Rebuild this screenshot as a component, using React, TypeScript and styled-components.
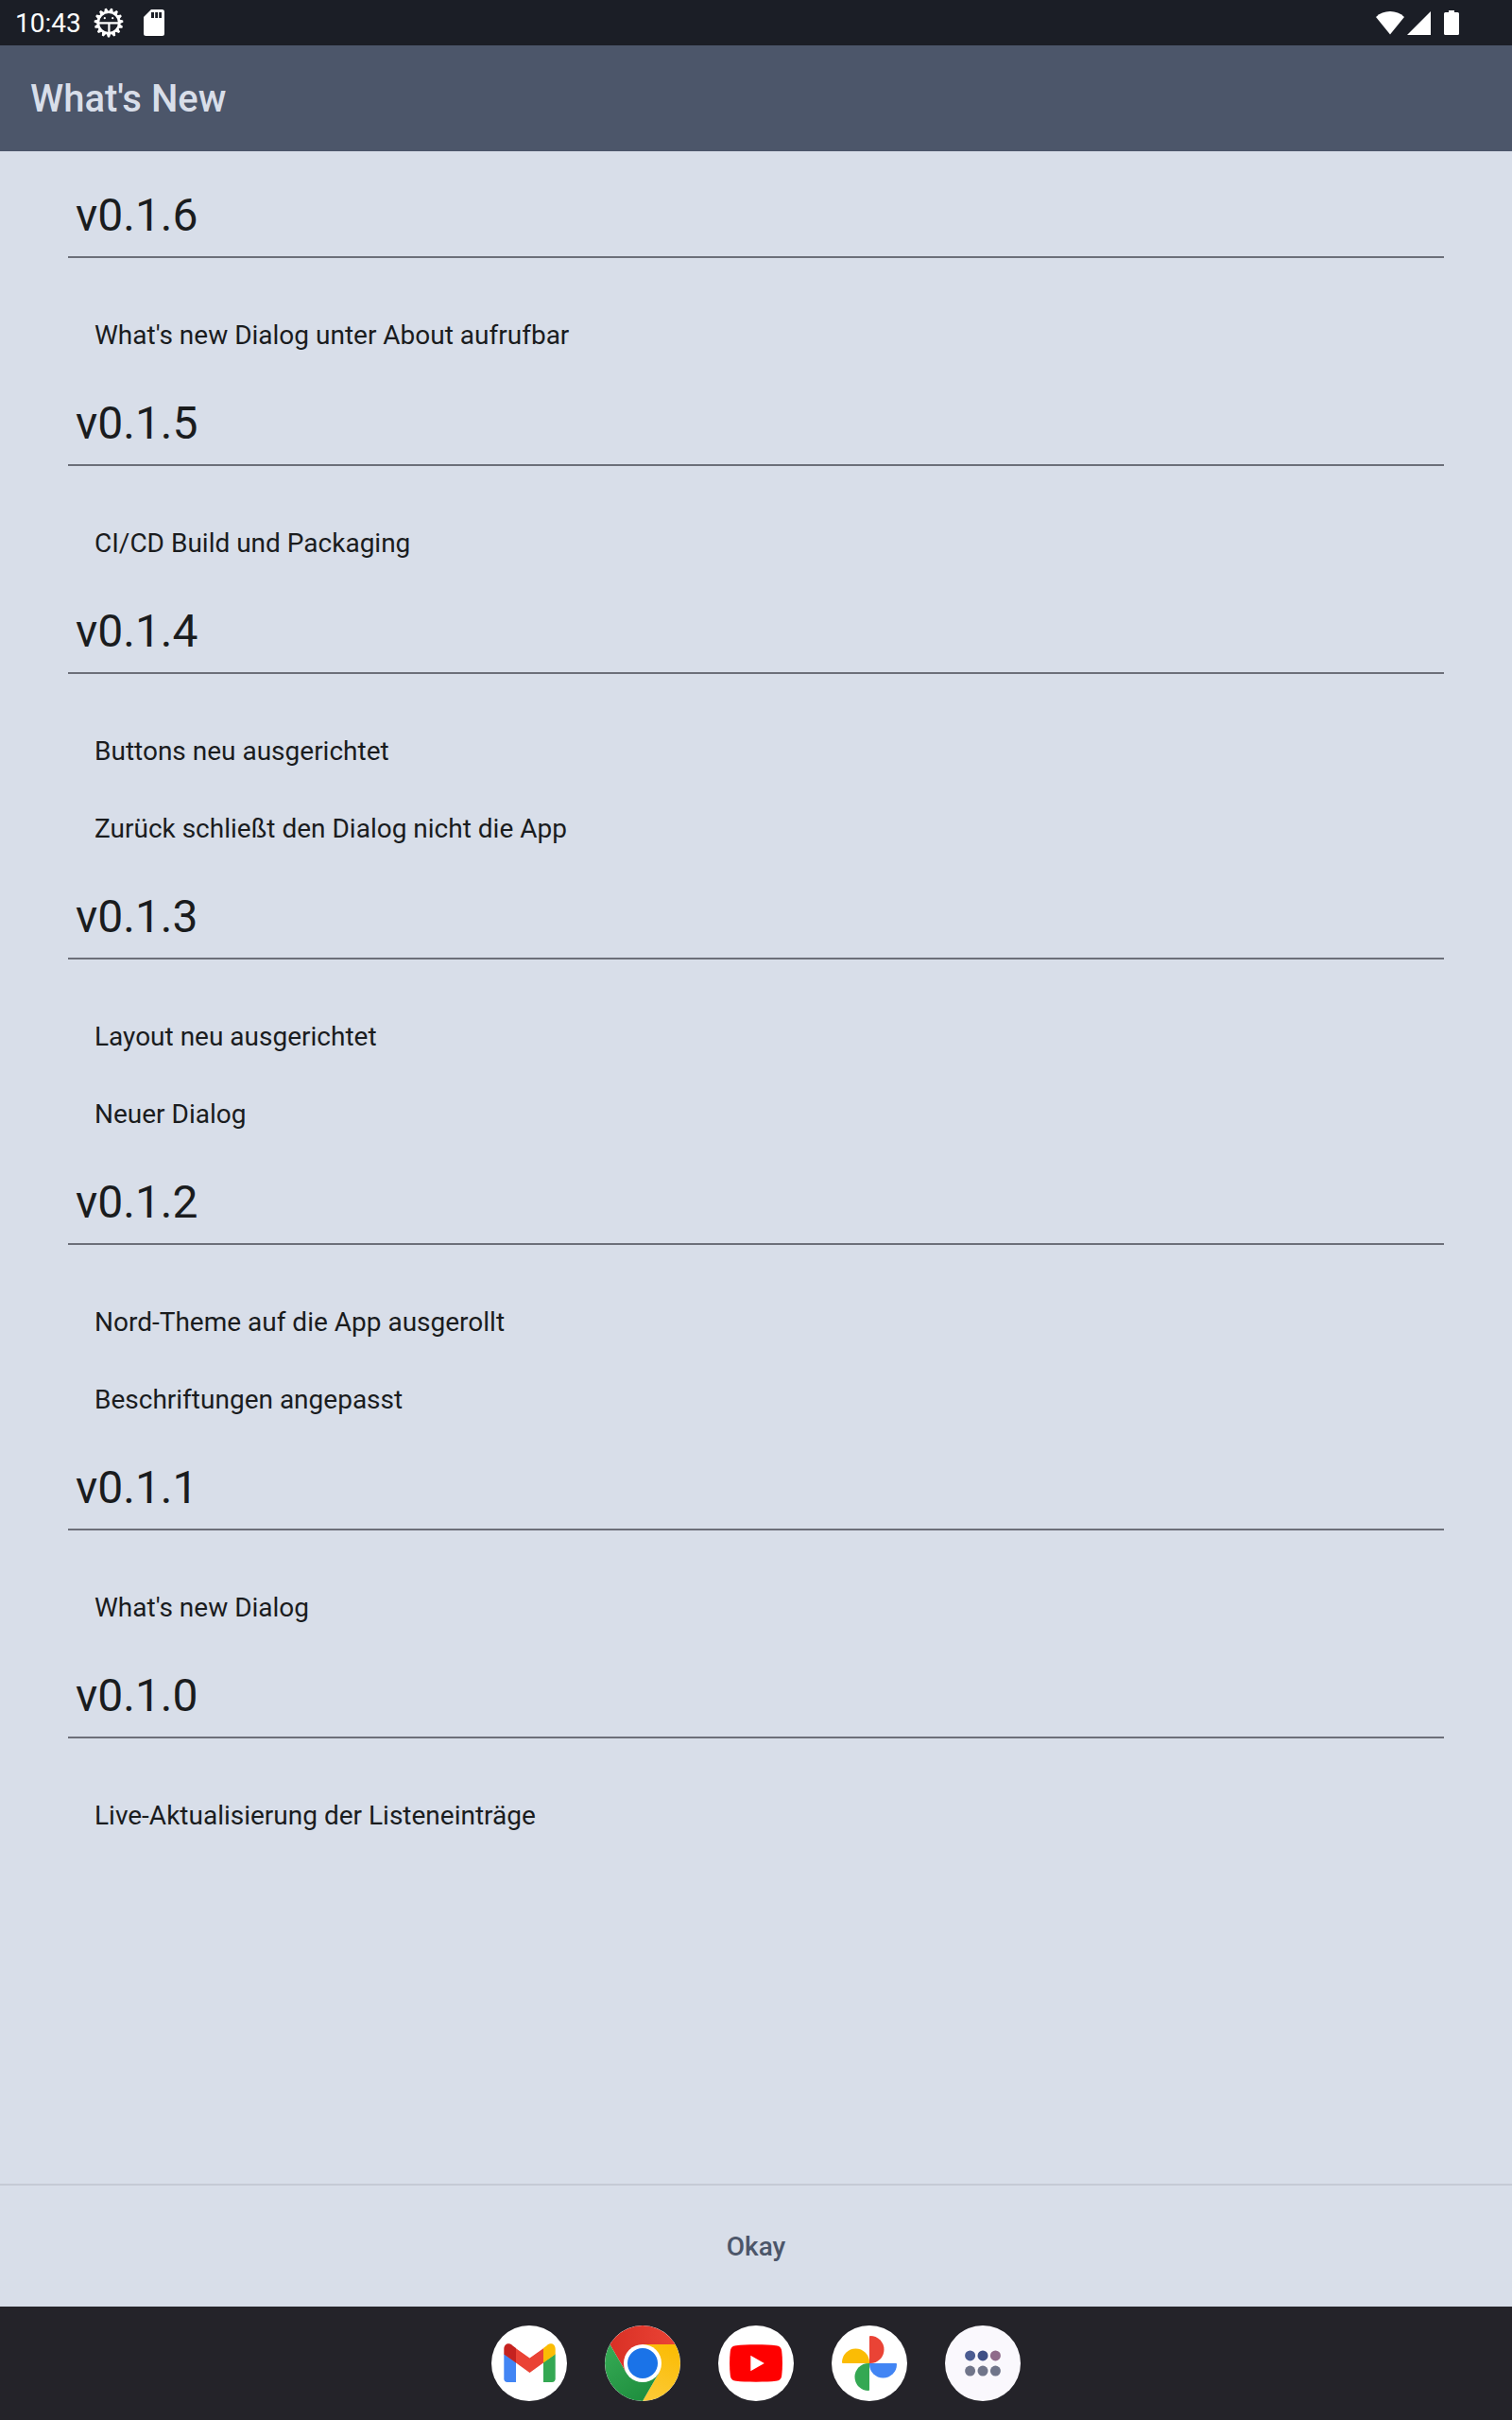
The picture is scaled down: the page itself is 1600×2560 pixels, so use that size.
import React from "react";
import styled, { createGlobalStyle } from "styled-components";

const color = {
  surface: "#d8dee9",
  primary: "#4c566a",
  text: "#1a1c1e",
  rule: "#6c6f79",
  footerRule: "#c5cad5",
  status: "#1b1e26",
  dock: "#242329",
};

const GlobalStyle = createGlobalStyle`
  *, *::before, *::after { box-sizing: border-box; }
  body {
    margin: 0;
    background: ${color.surface};
    color: ${color.text};
    font-family: Roboto, "Noto Sans", sans-serif;
  }
`;

const Screen = styled.div`
  display: flex;
  flex-direction: column;
  min-height: 100vh;
`;

const StatusBar = styled.div`
  display: flex;
  align-items: center;
  justify-content: space-between;
  height: 48px;
  padding: 0 56px 0 16px;
  background: ${color.status};
  color: #fff;
`;

const StatusGroup = styled.div<{ $gap: number }>`
  display: flex;
  align-items: center;
  gap: ${({ $gap }) => $gap}px;

  svg {
    display: block;
  }
`;

const Clock = styled.time`
  padding-top: 2px;
  font-size: 28px;
  line-height: 34px;
`;

const AppBar = styled.header`
  display: flex;
  align-items: center;
  height: 112px;
  padding: 2px 32px 0;
  background: ${color.primary};
`;

const Title = styled.h1`
  margin: 0;
  color: ${color.surface};
  font-size: 40px;
  font-weight: 500;
  line-height: 48px;
`;

const Content = styled.main`
  flex: 1;
  padding: 15px 72px 0;
`;

const VersionHeading = styled.h2`
  margin: 0;
  padding: 21px 8px 11px;
  border-bottom: 2px solid ${color.rule};
  font-size: 48px;
  font-weight: 400;
  line-height: 64px;
`;

const ChangeList = styled.ul`
  margin: 0;
  padding: 40px 28px 0;
  list-style: none;
`;

const Change = styled.li`
  padding: 25px 0 23px;
  font-size: 28px;
  line-height: 34px;
`;

const Footer = styled.footer`
  display: flex;
  align-items: center;
  justify-content: center;
  height: 130px;
  border-top: 2px solid ${color.footerRule};
`;

const TextButton = styled.button`
  padding: 25px 24px 23px;
  border: 0;
  background: none;
  color: ${color.primary};
  font-family: inherit;
  font-size: 28px;
  font-weight: 500;
  line-height: 34px;
  cursor: pointer;
`;

const Dock = styled.nav`
  display: flex;
  align-items: center;
  justify-content: center;
  gap: 40px;
  height: 120px;
  background: ${color.dock};
`;

const DockButton = styled.button<{ $tint?: string }>`
  width: 80px;
  height: 80px;
  padding: 0;
  overflow: hidden;
  border: 0;
  border-radius: 50%;
  background: ${({ $tint }) => $tint ?? "#fff"};
  cursor: pointer;

  svg {
    display: block;
  }
`;

const releases = [
  { version: "v0.1.6", changes: ["What's new Dialog unter About aufrufbar"] },
  { version: "v0.1.5", changes: ["CI/CD Build und Packaging"] },
  { version: "v0.1.4", changes: ["Buttons neu ausgerichtet", "Zurück schließt den Dialog nicht die App"] },
  { version: "v0.1.3", changes: ["Layout neu ausgerichtet", "Neuer Dialog"] },
  { version: "v0.1.2", changes: ["Nord-Theme auf die App ausgerollt", "Beschriftungen angepasst"] },
  { version: "v0.1.1", changes: ["What's new Dialog"] },
  { version: "v0.1.0", changes: ["Live-Aktualisierung der Listeneinträge"] },
];

const gearTeeth = Array.from({ length: 15 }, (_, i) => i * 24 + 12);

const GearIcon = () => (
  <svg width="32" height="32" viewBox="0 0 32 32" aria-hidden="true">
    {gearTeeth.map((angle) => (
      <path key={angle} d="M13.6 4.6 L15 0.6 H17 L18.4 4.6 Z" fill="#fff" transform={`rotate(${angle} 16 16)`} />
    ))}
    <circle cx="16" cy="16" r="11.2" fill="none" stroke="#fff" strokeWidth="2.6" />
    <path d="M6 16.4 H26 M16.4 16.4 V26" fill="none" stroke="#fff" strokeWidth="2.2" />
    <circle cx="11.8" cy="11.2" r="1.1" fill="#fff" />
    <circle cx="20.2" cy="11.2" r="1.1" fill="#fff" />
  </svg>
);

const SdCardIcon = () => (
  <svg width="22" height="28" viewBox="0 0 22 28" aria-hidden="true">
    <path
      fillRule="evenodd"
      d="M8 0 H19.5 A2.5 2.5 0 0 1 22 2.5 V25.5 A2.5 2.5 0 0 1 19.5 28 H2.5 A2.5 2.5 0 0 1 0 25.5 V8 Z M8 3 V9 H11 V3 Z M12.2 3 V9 H15 V3 Z M16.2 3 V9 H19 V3 Z"
      fill="#fff"
    />
  </svg>
);

const SignalIcons = () => (
  <svg width="60" height="26" viewBox="0 0 60 26" aria-hidden="true">
    <path d="M0 7 A22 22 0 0 1 30 7 L15 25.5 Z" fill="#fff" />
    <path d="M58 1 V26 H33 Z" fill="#fff" />
  </svg>
);

const BatteryIcon = () => (
  <svg width="16" height="26" viewBox="0 0 16 26" aria-hidden="true">
    <path d="M5 0 H11 V2 H14.5 A1.5 1.5 0 0 1 16 3.5 V24.5 A1.5 1.5 0 0 1 14.5 26 H1.5 A1.5 1.5 0 0 1 0 24.5 V3.5 A1.5 1.5 0 0 1 1.5 2 H5 Z" fill="#fff" />
  </svg>
);

const GmailIcon = () => (
  <svg width="80" height="80" viewBox="0 0 80 80" aria-hidden="true">
    <path d="M13.3 30 L26 39 V60 H17 A3.7 3.7 0 0 1 13.3 56.3 Z" fill="#4285f4" />
    <path d="M67.7 30 L55 39 V60 H64 A3.7 3.7 0 0 0 67.7 56.3 Z" fill="#34a853" />
    <path d="M26 24.2 L40.5 34.4 L55 24.2 V39.5 L40.5 50 L26 39.5 Z" fill="#ea4335" />
    <path d="M13.3 30.4 V25 C13.3 19.5 18.5 17.8 22 20.9 L26 24 V39.5 Z" fill="#c5221f" />
    <path d="M67.7 30.4 V25 C67.7 19.5 62.5 17.8 59 20.9 L55 24 V39.5 Z" fill="#fbbc04" />
  </svg>
);

const ChromeIcon = () => (
  <svg width="80" height="80" viewBox="0 0 80 80" aria-hidden="true">
    <defs>
      <linearGradient id="chromeRed" x1="0" x2="1">
        <stop offset="0" stopColor="#d93025" />
        <stop offset="1" stopColor="#ea4335" />
      </linearGradient>
      <linearGradient id="chromeYellow" x1="0.4" y1="1" x2="0.7" y2="0">
        <stop offset="0" stopColor="#fcc934" />
        <stop offset="1" stopColor="#fbbc04" />
      </linearGradient>
      <linearGradient id="chromeGreen" x1="0.7" y1="1" x2="0.1" y2="0.1">
        <stop offset="0" stopColor="#1e8e3e" />
        <stop offset="1" stopColor="#34a853" />
      </linearGradient>
    </defs>
    <path d="M40 40 L22.7 50 L5.4 20 A40 40 0 0 1 74.6 20 H40 Z" fill="url(#chromeRed)" />
    <path d="M40 40 V20 H74.6 A40 40 0 0 1 40 80 L57.3 50 Z" fill="url(#chromeYellow)" />
    <path d="M40 40 L57.3 50 L40 80 A40 40 0 0 1 5.4 20 L22.7 50 Z" fill="url(#chromeGreen)" />
    <circle cx="40" cy="40" r="20" fill="#fff" />
    <circle cx="40" cy="40" r="16" fill="#1a73e8" />
  </svg>
);

const YouTubeIcon = () => (
  <svg width="80" height="80" viewBox="0 0 80 80" aria-hidden="true">
    <path
      d="M40 20.3 C49 20.3 56 20.6 61 21.2 C65 21.7 66.7 23.4 67.2 27 C68.2 35 68.2 45 67.2 53 C66.7 56.6 65 58.3 61 58.8 C56 59.4 49 59.7 40 59.7 C31 59.7 24 59.4 19 58.8 C15 58.3 13.3 56.6 12.8 53 C11.8 45 11.8 35 12.8 27 C13.3 23.4 15 21.7 19 21.2 C24 20.6 31 20.3 40 20.3 Z"
      fill="#f00"
    />
    <path d="M34.3 31.8 L48.8 40 L34.3 48.2 Z" fill="#fff" />
  </svg>
);

const PhotosIcon = () => (
  <svg width="80" height="80" viewBox="0 0 80 80" aria-hidden="true">
    <path d="M40 40 V12 Q40 11 41 11 A14.5 14.5 0 0 1 41 40 Z" fill="#ea4335" />
    <path d="M40 40 H68 Q69 40 69 41 A14.5 14.5 0 0 1 40 41 Z" fill="#4285f4" />
    <path d="M40 40 V68 Q40 69 39 69 A14.5 14.5 0 0 1 39 40 Z" fill="#34a853" />
    <path d="M40 40 H12 Q11 40 11 39 A14.5 14.5 0 0 1 40 39 Z" fill="#fbbc04" />
  </svg>
);

const AppsIcon = () => (
  <svg width="80" height="80" viewBox="0 0 80 80" aria-hidden="true">
    <circle cx="26.6" cy="31.9" r="5.5" fill="#4b5c92" />
    <circle cx="40" cy="31.9" r="5.5" fill="#3f5086" />
    <circle cx="53.4" cy="31.9" r="5.5" fill="#8f6b8b" />
    <circle cx="26.6" cy="48.1" r="5.5" fill="#70758a" />
    <circle cx="40" cy="48.1" r="5.5" fill="#70758a" />
    <circle cx="53.4" cy="48.1" r="5.5" fill="#70758a" />
  </svg>
);

const dockApps = [
  { label: "Gmail", Icon: GmailIcon },
  { label: "Chrome", Icon: ChromeIcon },
  { label: "YouTube", Icon: YouTubeIcon },
  { label: "Fotos", Icon: PhotosIcon },
  { label: "Alle Apps", Icon: AppsIcon, tint: "#faf8fd" },
];

export default function App() {
  return (
    <>
      <GlobalStyle />
      <Screen>
        <StatusBar>
          <StatusGroup $gap={21}>
            <StatusGroup $gap={13}>
              <Clock>10:43</Clock>
              <GearIcon />
            </StatusGroup>
            <SdCardIcon />
          </StatusGroup>
          <StatusGroup $gap={12}>
            <SignalIcons />
            <BatteryIcon />
          </StatusGroup>
        </StatusBar>
        <AppBar>
          <Title>What's New</Title>
        </AppBar>
        <Content>
          {releases.map(({ version, changes }) => (
            <section key={version}>
              <VersionHeading>{version}</VersionHeading>
              <ChangeList>
                {changes.map((change) => (
                  <Change key={change}>{change}</Change>
                ))}
              </ChangeList>
            </section>
          ))}
        </Content>
        <Footer>
          <TextButton type="button">Okay</TextButton>
        </Footer>
        <Dock aria-label="Apps">
          {dockApps.map(({ label, Icon, tint }) => (
            <DockButton key={label} type="button" aria-label={label} $tint={tint}>
              <Icon />
            </DockButton>
          ))}
        </Dock>
      </Screen>
    </>
  );
}
